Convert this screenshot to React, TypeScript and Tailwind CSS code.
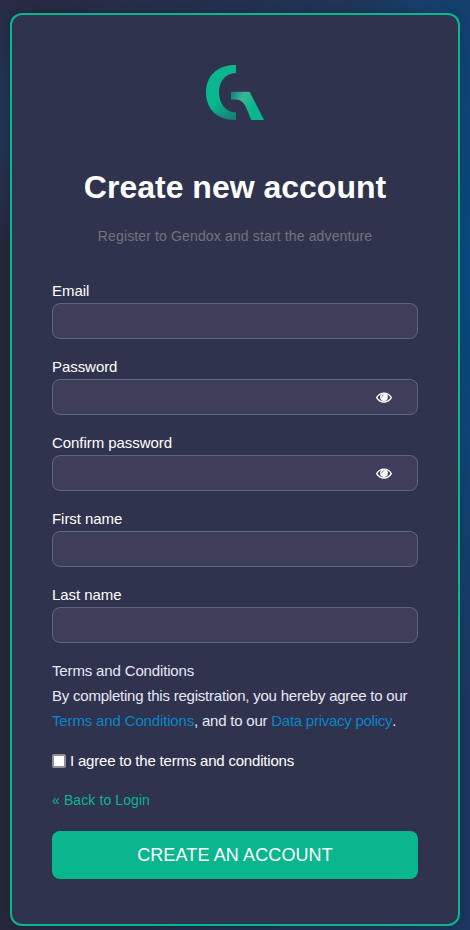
import React from "react";

function Logo() {
  return (
    <svg width="60" height="56" viewBox="0 0 60 56" className="block" aria-label="Gendox">
      <defs>
        <linearGradient id="ring" x1="12" y1="28" x2="30" y2="56" gradientUnits="userSpaceOnUse">
          <stop offset="0.25" stopColor="#09b68d" />
          <stop offset="1" stopColor="#14786f" />
        </linearGradient>
        <linearGradient id="leg" x1="25" y1="31" x2="50" y2="44" gradientUnits="userSpaceOnUse">
          <stop offset="0" stopColor="#197f75" />
          <stop offset="0.4" stopColor="#3cb698" />
          <stop offset="0.9" stopColor="#09b68d" />
        </linearGradient>
      </defs>
      <path d="M31 0V8C20 8.500 14 17 14 27.500S20 47 31 47.500V55C12 55.500 1 43.500 1 27.500S12-.5 31 0Z" fill="url(#ring)" />
      <path d="M26 26.700H44.700L59 55H46.500C41.500 45 40.500 35 31 34.600H26Z" fill="url(#leg)" />
    </svg>
  );
}

function Eye() {
  return (
    <svg width="16" height="16" viewBox="0 0 16 16" className="block">
      <path d="M.7 8.600C2.300 5.700 5 4.100 8 4.100s5.700 1.600 7.300 4.500c-1.600 2.800-4.300 4.400-7.300 4.400S2.300 11.400.7 8.600Z" fill="none" stroke="white" strokeWidth="1.400" />
      <circle cx="8" cy="8.100" r="3.900" fill="white" />
      <path d="M5.800 8.100C5.800 6.800 6.700 5.900 8 5.900" fill="none" stroke="#3d3f5a" strokeWidth=".6" strokeLinecap="round" />
    </svg>
  );
}

function Field({ label, secret = false }: { label: string; secret?: boolean }) {
  return (
    <label className="block h-[76px]">
      <span className="block h-6 leading-6 tracking-[-0.06px]">{label}</span>
      <span className="flex h-9 items-center rounded-lg border border-[#62647e] bg-[#3d3f5a] pl-3 pr-[25px]">
        <input type={secret ? "password" : "text"} className="min-w-0 flex-1 bg-transparent outline-none" />
        {secret && <Eye />}
      </span>
    </label>
  );
}

export default function App() {
  return (
    <main className="h-[930px] w-[470px] overflow-hidden bg-[radial-gradient(ellipse_65px_130px_at_0px_110px,#20375b_0%,transparent_100%),radial-gradient(ellipse_180px_430px_at_490px_270px,#064d84_0%,transparent_100%),linear-gradient(90deg,#28283d_0%,#1c3860_100%)] px-[10px] pt-[13px] font-['Liberation_Sans',Arial,sans-serif] text-[15px] text-white">
      <section className="h-[913px] rounded-[12px] border-2 border-[#09b68d] bg-[#30334e] px-10 pt-[50px] shadow-[0_2px_10px_rgba(20,21,33,0.25)]">
        <div className="ml-[153px]">
          <Logo />
        </div>
        <h1 className="mt-[42px] text-center text-[32px] leading-12 font-bold whitespace-nowrap">Create new account</h1>
        <p className="mt-[13px] text-center text-sm leading-6 tracking-[0.14px] text-[#717379]">Register to Gendox and start the adventure</p>
        <form className="mt-[31px]">
          <Field label="Email" />
          <Field label="Password" secret />
          <Field label="Confirm password" secret />
          <Field label="First name" />
          <Field label="Last name" />
          <div className="-mt-px leading-[25px] tracking-[-0.22px] whitespace-nowrap text-[#e7e8f5]">
            <p className="tracking-[-0.15px]">Terms and Conditions</p>
            <p>By completing this registration, you hereby agree to our</p>
            <p>
              <a className="tracking-[-0.15px] text-[#0786c8]">Terms and Conditions</a>, and to our <a className="tracking-[-0.26px] text-[#0786c8]">Data privacy policy</a>.
            </p>
          </div>
          <label className="mt-4 flex h-6 items-center gap-1 tracking-[-0.2px]">
            <input type="checkbox" className="size-[14px] appearance-none rounded-[2px] border-2 border-[#8f8f9d] bg-white" />
            <span>I agree to the terms and conditions</span>
          </label>
          <a className="mt-[15px] block text-sm leading-6 tracking-[0.1px] text-[#09b68d]">« Back to Login</a>
          <button type="button" className="mt-[19px] h-12 w-full rounded-lg bg-[#09b68d] text-lg tracking-[0.12px]">CREATE AN ACCOUNT</button>
        </form>
      </section>
    </main>
  );
}
